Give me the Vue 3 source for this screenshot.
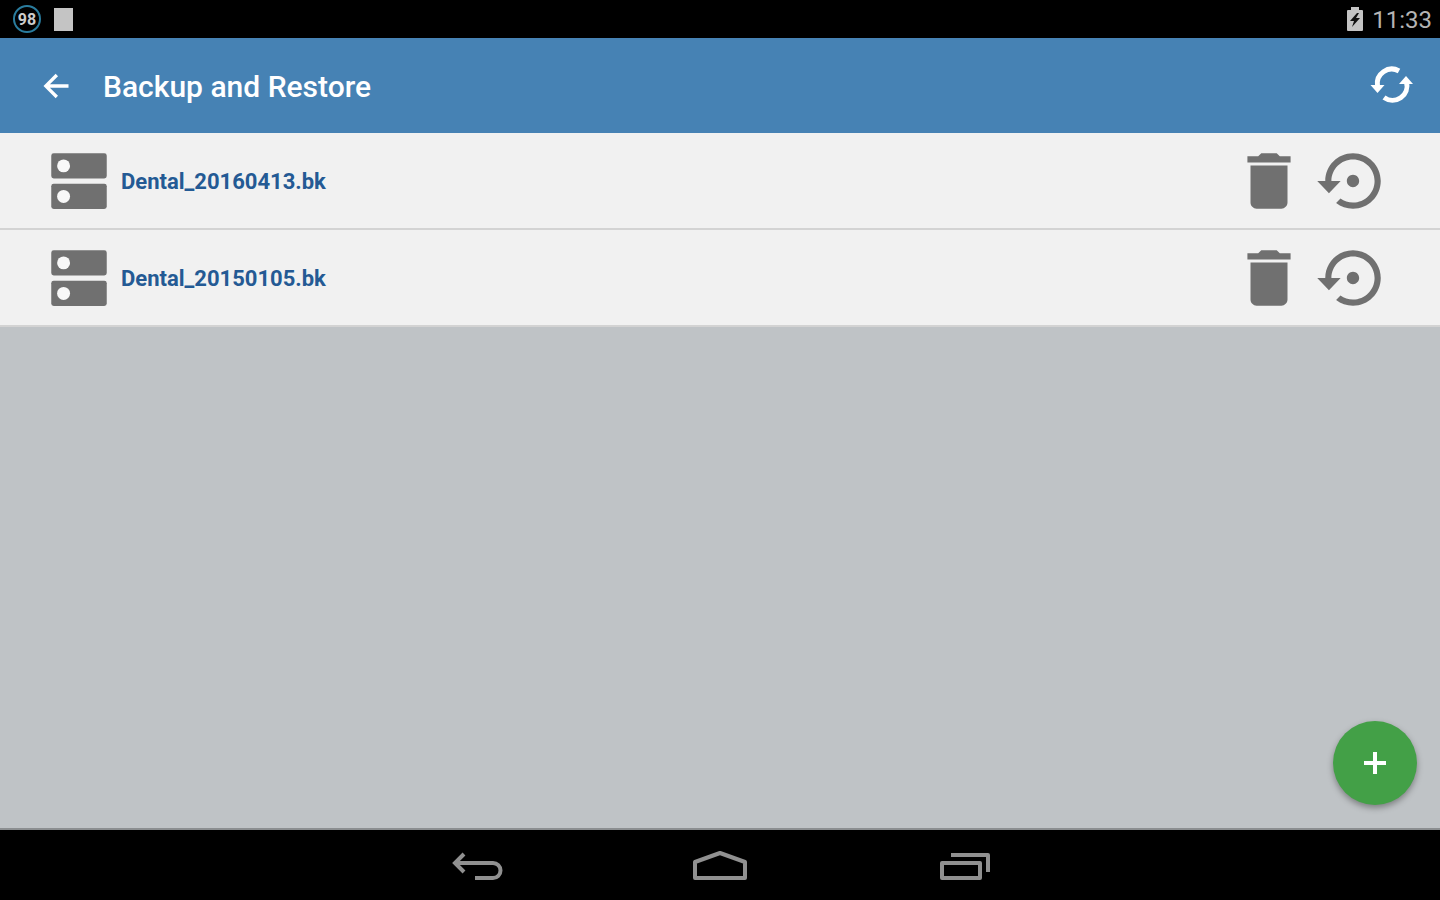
<script setup>
import { ref } from 'vue'

const backups = ref(['Dental_20160413.bk', 'Dental_20150105.bk'])
</script>

<template>
  <div class="screen">
    <div class="status">
      <div class="notices">
        <span class="level">98</span>
        <span class="sheet"></span>
      </div>
      <div class="system">
        <svg class="battery" viewBox="0 0 18 24" aria-hidden="true">
          <path fill="#c4c4c4" d="M5 0h8v3h3q1 0 1 1v19q0 1-1 1H2q-1 0-1-1V4q0-1 1-1h3z" />
          <path fill="#111" d="M11 6 4 14h4l-2 6 8-9h-4l3-5z" />
        </svg>
        <time class="clock">11:33</time>
      </div>
    </div>

    <header class="bar">
      <button class="plain back" type="button" aria-label="Back">
        <svg class="arrow" viewBox="0 0 24 24" aria-hidden="true">
          <path d="M19.500 11H8.330l4.890-4.890L11.800 4.700 4.500 12l7.300 7.300 1.410-1.410L8.330 13H19.500v-2z" />
        </svg>
      </button>
      <h1 class="title">Backup and Restore</h1>
      <button class="plain sync" type="button" aria-label="Refresh">
        <svg class="refresh" viewBox="0 0 48 48" aria-hidden="true">
          <path class="arc" d="M9.500 24A14.500 14.500 0 0 1 31 9" />
          <path class="arc" d="M38.500 20A14.500 14.500 0 0 1 16 35.500" />
          <path d="M2.500 23h14l-7 8zM31 22h14l-7-8z" />
        </svg>
      </button>
    </header>

    <main class="content">
      <ul class="list">
        <li v-for="name in backups" :key="name" class="row">
          <svg class="icon" viewBox="0 0 24 24" aria-hidden="true">
            <rect x="3" y="3" width="18" height="8.200" rx="0.800" />
            <rect x="3" y="12.900" width="18" height="8.200" rx="0.800" />
            <circle class="hole" cx="7" cy="7.100" r="2.100" />
            <circle class="hole" cx="7" cy="17" r="2.100" />
          </svg>
          <span class="name">{{ name }}</span>
          <button class="plain" type="button" :aria-label="`Delete ${name}`">
            <svg class="icon" viewBox="0 0 24 24" aria-hidden="true">
              <path d="M6 19c0 1.100.9 2 2 2h8c1.100 0 2-.9 2-2V7H6v12zM19 4h-3.500l-1-1h-5l-1 1H5v2h14V4z" />
            </svg>
          </button>
          <button class="plain" type="button" :aria-label="`Restore ${name}`">
            <svg class="icon" viewBox="0 0 24 24" aria-hidden="true">
              <path d="M14 12c0-1.100-.9-2-2-2s-2 .9-2 2 .9 2 2 2 2-.9 2-2zm-2-9c-4.970 0-9 4.030-9 9H.4L4.200 16 8 12H5c0-3.870 3.130-7 7-7s7 3.130 7 7-3.130 7-7 7c-1.510 0-2.910-.49-4.060-1.300l-1.420 1.440C8.040 20.300 9.940 21 12 21c4.970 0 9-4.030 9-9s-4.030-9-9-9z" />
            </svg>
          </button>
        </li>
      </ul>
      <button class="fab" type="button" aria-label="Add backup">
        <svg class="plus" viewBox="0 0 22 22" aria-hidden="true">
          <path d="M11 0v22M0 11h22" />
        </svg>
      </button>
    </main>

    <nav class="nav">
      <button class="plain" type="button" aria-label="System back">
        <svg class="key" viewBox="0 0 60 36" aria-hidden="true">
          <path d="M18 4 9 13l9 9M9 13h38a7.500 7.500 0 0 1 0 15H29" />
        </svg>
      </button>
      <button class="plain" type="button" aria-label="Home">
        <svg class="key" viewBox="0 0 60 36" aria-hidden="true">
          <path d="M5 28V12L30 3l25 9v16z" stroke-linejoin="round" />
        </svg>
      </button>
      <button class="plain" type="button" aria-label="Recent apps">
        <svg class="key" viewBox="0 0 60 36" aria-hidden="true">
          <path d="M8 13h38v15H8zM17 5h37v17" stroke-linejoin="round" />
        </svg>
      </button>
    </nav>
  </div>
</template>

<style>
body {
  margin: 0;
}
</style>

<style scoped>
.screen {
  display: flex;
  flex-direction: column;
  min-height: 100vh;
  font-family: Roboto, "Liberation Sans", sans-serif;
  background: #000;
}

.plain {
  display: flex;
  align-items: center;
  justify-content: center;
  padding: 0;
  border: 0;
  background: none;
  cursor: pointer;
}

.status {
  display: flex;
  align-items: center;
  justify-content: space-between;
  height: 38px;
  padding: 0 8px 0 13px;
  box-sizing: border-box;
}

.notices {
  display: flex;
  align-items: center;
  gap: 13px;
}

.level {
  display: flex;
  align-items: center;
  justify-content: center;
  width: 28px;
  height: 28px;
  box-sizing: border-box;
  border: 2px solid #2a7c9e;
  border-radius: 50%;
  color: #ccc;
  font-size: 16px;
  font-weight: 700;
}

.sheet {
  width: 19px;
  height: 23px;
  background: #c4c4c4;
}

.system {
  display: flex;
  align-items: center;
  gap: 8px;
}

.battery {
  width: 18px;
  height: 24px;
}

.clock {
  padding-top: 2px;
  color: #b4b4b4;
  font-size: 24px;
  line-height: 36px;
}

.bar {
  display: flex;
  align-items: center;
  height: 95px;
  padding: 0 24px 0 36px;
  box-sizing: border-box;
  background: #4682b4;
  color: #fff;
}

.arrow {
  width: 40px;
  height: 40px;
  fill: #fff;
}

.title {
  flex: 1;
  margin: 0 0 0 27px;
  padding-top: 2px;
  font-size: 30px;
  font-weight: 500;
  line-height: 40px;
}

.refresh {
  width: 48px;
  height: 48px;
  fill: #fff;
}

.arc {
  fill: none;
  stroke: #fff;
  stroke-width: 5;
}

.content {
  position: relative;
  flex: 1;
  background: #bfc3c6;
  border-bottom: 2px solid #8b8e90;
}

.list {
  margin: 0;
  padding: 0;
  list-style: none;
}

.row {
  display: flex;
  align-items: center;
  height: 97px;
  padding: 0 50px 0 42px;
  box-sizing: border-box;
  gap: 10px;
  background: #f1f1f1;
  border-bottom: 2px solid #d3d3d3;
}

.icon {
  width: 74px;
  height: 74px;
  fill: #707070;
}

.hole {
  fill: #f8f8f8;
}

.name {
  flex: 1;
  margin-left: -5px;
  padding-top: 2px;
  color: #245a94;
  font-size: 22px;
  font-weight: 700;
}

.fab {
  position: absolute;
  right: 23px;
  bottom: 23px;
  display: flex;
  align-items: center;
  justify-content: center;
  width: 84px;
  height: 84px;
  padding: 0;
  border: 0;
  border-radius: 50%;
  background: #43a047;
  box-shadow: 0 3px 6px rgba(0, 0, 0, 0.35);
  cursor: pointer;
}

.plus {
  width: 22px;
  height: 22px;
  fill: none;
  stroke: #fff;
  stroke-width: 4;
}

.nav {
  display: flex;
  justify-content: center;
  gap: 184px;
  height: 70px;
  padding-top: 5px;
  box-sizing: border-box;
}

.key {
  width: 60px;
  height: 36px;
  fill: none;
  stroke: #909090;
  stroke-width: 4;
}
</style>
